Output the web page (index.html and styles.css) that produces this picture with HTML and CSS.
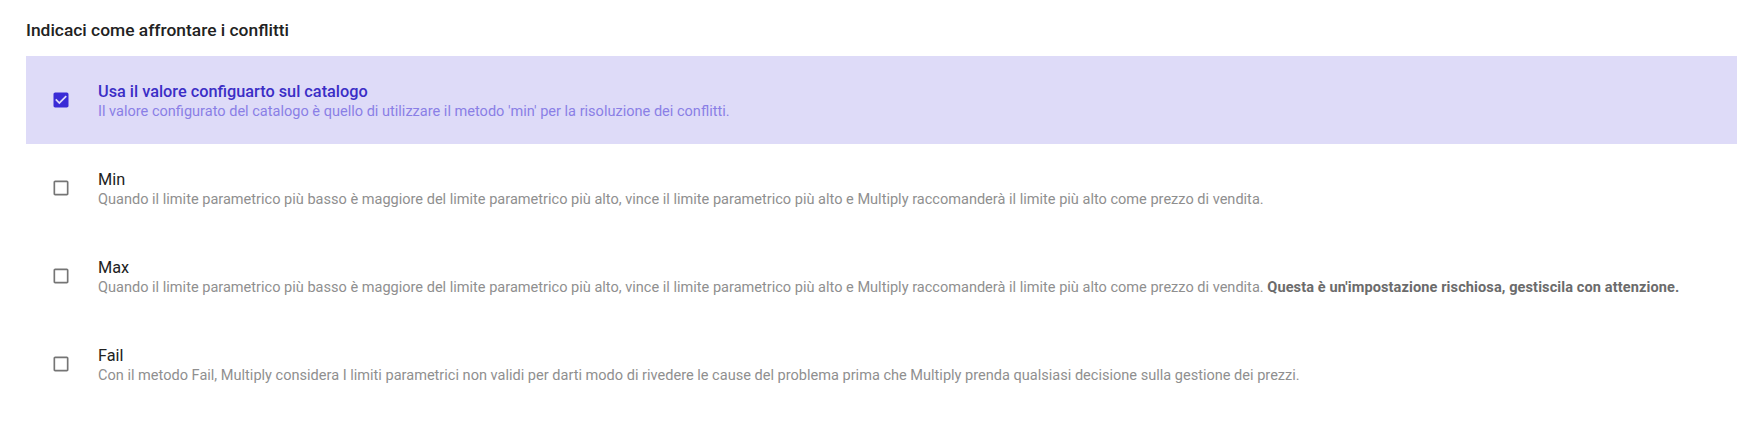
FILE: index.html
```html
<!DOCTYPE html>
<html lang="it">

<head>
    <title>Conflitti</title>
    <link rel="stylesheet" href="styles.css">
</head>

<body>

    <div id="container">

        <h3 class="section-title">Indicaci come affrontare i conflitti</h3>

        <div class="options">

            <div class="option selected">
                <svg class="check" viewBox="0 0 24 24"><path d="M19 3H5c-1.11 0-2 .9-2 2v14c0 1.1.89 2 2 2h14c1.11 0 2-.9 2-2V5c0-1.1-.89-2-2-2zm-9 14l-5-5 1.41-1.41L10 14.17l7.59-7.59L19 8l-9 9z"/></svg>
                <div class="option-text">
                    <div class="option-title">Usa il valore configuarto sul catalogo</div>
                    <div class="option-desc">Il valore configurato del catalogo è quello di utilizzare il metodo 'min' per la risoluzione dei conflitti.</div>
                </div>
            </div>

            <div class="option">
                <svg class="check" viewBox="0 0 24 24"><path d="M19 5v14H5V5h14m0-2H5c-1.1 0-2 .9-2 2v14c0 1.1.9 2 2 2h14c1.1 0 2-.9 2-2V5c0-1.1-.9-2-2-2z"/></svg>
                <div class="option-text">
                    <div class="option-title">Min</div>
                    <div class="option-desc">Quando il limite parametrico più basso è maggiore del limite parametrico più alto, vince il limite parametrico più alto e Multiply raccomanderà il limite più alto come prezzo di vendita.</div>
                </div>
            </div>

            <div class="option">
                <svg class="check" viewBox="0 0 24 24"><path d="M19 5v14H5V5h14m0-2H5c-1.1 0-2 .9-2 2v14c0 1.1.9 2 2 2h14c1.1 0 2-.9 2-2V5c0-1.1-.9-2-2-2z"/></svg>
                <div class="option-text">
                    <div class="option-title">Max</div>
                    <div class="option-desc">Quando il limite parametrico più basso è maggiore del limite parametrico più alto, vince il limite parametrico più alto e Multiply raccomanderà il limite più alto come prezzo di vendita. <b>Questa è un'impostazione rischiosa, gestiscila con attenzione.</b></div>
                </div>
            </div>

            <div class="option">
                <svg class="check" viewBox="0 0 24 24"><path d="M19 5v14H5V5h14m0-2H5c-1.1 0-2 .9-2 2v14c0 1.1.9 2 2 2h14c1.1 0 2-.9 2-2V5c0-1.1-.9-2-2-2z"/></svg>
                <div class="option-text">
                    <div class="option-title">Fail</div>
                    <div class="option-desc">Con il metodo Fail, Multiply considera I limiti parametrici non validi per darti modo di rivedere le cause del problema prima che Multiply prenda qualsiasi decisione sulla gestione dei prezzi.</div>
                </div>
            </div>

        </div>

    </div>

</body>
</html>
```

FILE: styles.css
```css
body {
    font-family: Roboto, 'Noto Sans', sans-serif;
    background-color: #fff;
    margin: 0;
    padding: 0;
}

#container {
    padding: 20px 0 0 26px;
}

.section-title {
    margin: 0 0 16px;
    font-size: 17.4px;
    line-height: 20px;
    font-weight: 500;
    color: #222;
}

.option {
    display: flex;
    align-items: center;
    height: 88px;
    padding-left: 25px;
}

.option.selected {
    background-color: #dedbf8;
}

.check {
    width: 20px;
    height: 20px;
    flex-shrink: 0;
    fill: #757575;
    margin-right: 27px;
}

.option-text {
    padding-top: 4px;
}

.option-title {
    font-size: 16.3px;
    line-height: 20px;
    color: #222;
}

.option-desc {
    font-size: 14.55px;
    line-height: 20px;
    color: #8f8f8f;
}

.option-desc b {
    font-weight: 700;
    letter-spacing: 0.1px;
    color: #6b6b6b;
}

.selected .check {
    fill: #3a2bd6;
}

.selected .option-title {
    font-weight: 500;
    color: #3b2ec6;
}

.selected .option-desc {
    color: #8a7fe6;
}
```
